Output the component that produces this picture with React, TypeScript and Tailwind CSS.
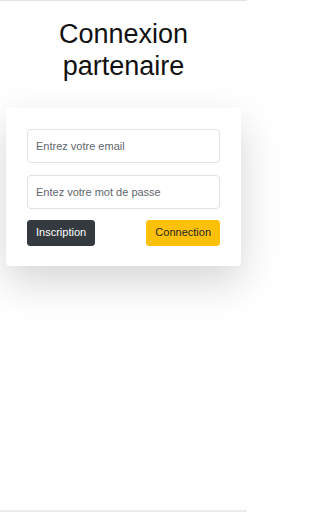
import { useState } from "react";

export default function App() {
  const [email, setEmail] = useState("");
  const [password, setPassword] = useState("");

  return (
    <div
      className="flex min-h-[512px] w-[247px] flex-col border-t border-[#e4e4e4] bg-white text-[#212529]"
      style={{ fontFamily: '"Liberation Sans", Arial, sans-serif' }}
    >
      {/* Title */}
      <h1 className="mt-[17px] text-center text-[27px] leading-[1.2] font-normal text-[#111]">
        Connexion
        <br />
        partenaire
      </h1>

      {/* Login card */}
      <form
        onSubmit={(e) => e.preventDefault()}
        className="mx-[6px] mt-[25px] flex flex-col rounded-[4px] bg-white px-[21px] pt-[21px] pb-[20px] shadow-[0_16px_40px_rgba(0,0,0,0.17)]"
      >
        <input
          type="email"
          value={email}
          onChange={(e) => setEmail(e.target.value)}
          placeholder="Entrez votre email"
          className="h-[34px] w-full rounded-[4px] border border-[#dee2e6] bg-white px-[8px] text-[11px] outline-none placeholder:text-[#5f666d]"
        />
        <input
          type="password"
          value={password}
          onChange={(e) => setPassword(e.target.value)}
          placeholder="Entez votre mot de passe"
          className="mt-[12px] h-[34px] w-full rounded-[4px] border border-[#dee2e6] bg-white px-[8px] text-[11px] outline-none placeholder:text-[#5f666d]"
        />
        <div className="mt-[11px] flex items-center justify-between">
          <button
            type="button"
            className="h-[26px] rounded-[3px] border border-[#343a40] bg-[#343a40] px-[8px] text-[11px] leading-none text-white"
          >
            Inscription
          </button>
          <button
            type="submit"
            className="h-[26px] rounded-[3px] border border-[#ffc107] bg-[#ffc107] px-[8px] text-[11px] leading-none text-[#212529]"
          >
            Connection
          </button>
        </div>
      </form>

      <div className="flex-1" />
      <div className="h-[2px] bg-[#ececec]" />
    </div>
  );
}
